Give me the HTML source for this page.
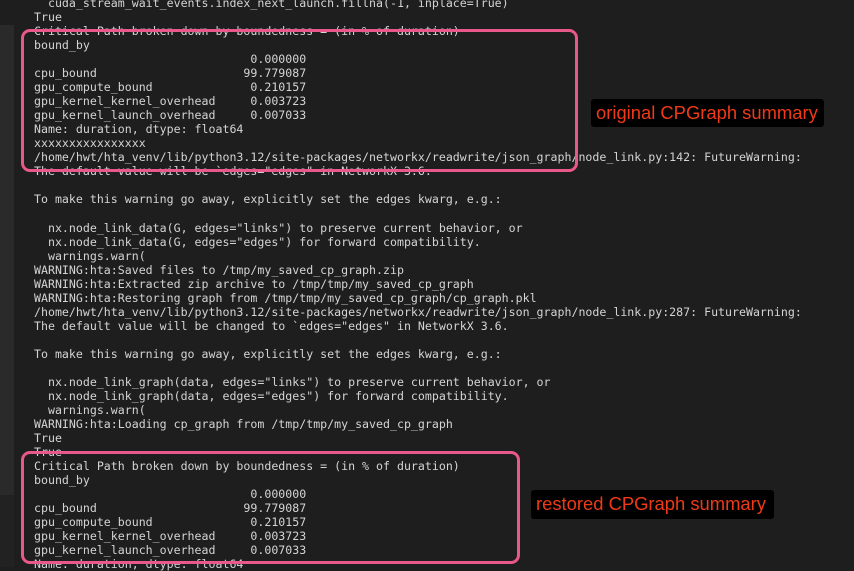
<!DOCTYPE html>
<html><head><meta charset="utf-8"><style>
html,body{margin:0;padding:0;}
body{width:854px;height:567px;background:#1e1e1e;position:relative;overflow:hidden;}
.side{position:absolute;left:0;top:25px;width:14px;height:470px;background:#2a2a2a;}
.side2{position:absolute;left:0;top:495px;width:14px;height:72px;background:#222;}
pre{position:absolute;left:34px;top:-4px;margin:0;font-family:"DejaVu Sans Mono","Liberation Mono",monospace;font-size:11.6px;line-height:14.03px;color:#d4d4d4;white-space:pre;}
.box{position:absolute;border:3px solid #e8588a;border-radius:9px;box-sizing:border-box;}
.lab{position:absolute;background:#000;color:#f03a17;font-family:"Liberation Sans",sans-serif;font-size:18.4px;border-radius:3px;box-sizing:border-box;padding:0 0 0 5px;line-height:28px;white-space:nowrap;}
</style></head><body>
<div class="side"></div><div class="side2"></div>
<pre>  cuda_stream_wait_events.index_next_launch.fillna(-1, inplace=True)
True
Critical Path broken down by boundedness = (in % of duration)
bound_by
                               0.000000
cpu_bound                     99.779087
gpu_compute_bound              0.210157
gpu_kernel_kernel_overhead     0.003723
gpu_kernel_launch_overhead     0.007033
Name: duration, dtype: float64
xxxxxxxxxxxxxxxx
/home/hwt/hta_venv/lib/python3.12/site-packages/networkx/readwrite/json_graph/node_link.py:142: FutureWarning:
The default value will be `edges="edges" in NetworkX 3.6.

To make this warning go away, explicitly set the edges kwarg, e.g.:

  nx.node_link_data(G, edges="links") to preserve current behavior, or
  nx.node_link_data(G, edges="edges") for forward compatibility.
  warnings.warn(
WARNING:hta:Saved files to /tmp/my_saved_cp_graph.zip
WARNING:hta:Extracted zip archive to /tmp/tmp/my_saved_cp_graph
WARNING:hta:Restoring graph from /tmp/tmp/my_saved_cp_graph/cp_graph.pkl
/home/hwt/hta_venv/lib/python3.12/site-packages/networkx/readwrite/json_graph/node_link.py:287: FutureWarning:
The default value will be changed to `edges="edges" in NetworkX 3.6.

To make this warning go away, explicitly set the edges kwarg, e.g.:

  nx.node_link_graph(data, edges="links") to preserve current behavior, or
  nx.node_link_graph(data, edges="edges") for forward compatibility.
  warnings.warn(
WARNING:hta:Loading cp_graph from /tmp/tmp/my_saved_cp_graph
True
True
Critical Path broken down by boundedness = (in % of duration)
bound_by
                               0.000000
cpu_bound                     99.779087
gpu_compute_bound              0.210157
gpu_kernel_kernel_overhead     0.003723
gpu_kernel_launch_overhead     0.007033
Name: duration, dtype: float64</pre>
<div class="box" style="left:21px;top:29px;width:557px;height:143px;"></div>
<div class="box" style="left:21px;top:451px;width:499px;height:113px;"></div>
<div class="lab" style="left:591px;top:99px;width:233px;height:28px;">original CPGraph summary</div>
<div class="lab" style="left:531px;top:490px;width:243px;height:29px;">restored CPGraph summary</div>
</body></html>
